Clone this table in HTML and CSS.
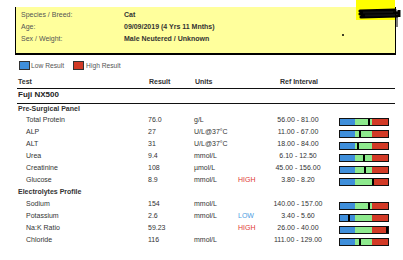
FILE: index.html
```html
<!DOCTYPE html>
<html>
<head>
<meta charset="utf-8">
<link rel="stylesheet" href="styles.css">
</head>
<body>
<div class="redact-bg"></div>
<svg class="redact" width="46" height="26" viewBox="0 0 46 26">
  <path d="M3 10 L38 9 M3 13 L40 12 M4 16 L40 15" stroke="#000" stroke-width="3.2" stroke-linecap="round" fill="none"/>
  <path d="M6 11.5 L36 11 M8 14.5 L38 14" stroke="#111" stroke-width="2" fill="none"/>
  <path d="M42 9 L42 16" stroke="#000" stroke-width="3" fill="none"/>
  <path d="M40 10 L40 26" stroke="#000" stroke-width="1" fill="none"/>
</svg>
<span class="dot"></span>
<div class="patient">
  <div class="prow"><span class="plabel">Species / Breed:</span><span class="pval">Cat</span></div>
  <div class="prow"><span class="plabel">Age:</span><span class="pval">09/09/2019 (4 Yrs 11 Mnths)</span></div>
  <div class="prow"><span class="plabel">Sex / Weight:</span><span class="pval">Male Neutered / Unknown</span></div>
</div>
<div class="legend">
  <span class="sq sq-low"></span><span class="ltext">Low Result</span>
  <span class="sq sq-high"></span><span class="ltext">High Result</span>
</div>
<div class="table">
  <div class="thead">
    <span class="c-name">Test</span><span class="c-res">Result</span><span class="c-unit">Units</span><span class="c-flag"></span><span class="c-ref">Ref Interval</span>
  </div>
  <div class="device">Fuji NX500</div>
  <div class="group">Pre-Surgical Panel</div>
  <div class="row"><span class="c-name">Total Protein</span><span class="c-res">76.0</span><span class="c-unit">g/L</span><span class="c-flag"></span><span class="c-ref">56.00 - 81.00</span><span class="bar"><i class="b"></i><i class="g"></i><i class="r"></i><b class="mk" style="left:28px"></b></span></div>
  <div class="row"><span class="c-name">ALP</span><span class="c-res">27</span><span class="c-unit">U/L@37°C</span><span class="c-flag"></span><span class="c-ref">11.00 - 67.00</span><span class="bar"><i class="b"></i><i class="g"></i><i class="r"></i><b class="mk" style="left:19px"></b></span></div>
  <div class="row"><span class="c-name">ALT</span><span class="c-res">31</span><span class="c-unit">U/L@37°C</span><span class="c-flag"></span><span class="c-ref">18.00 - 84.00</span><span class="bar"><i class="b"></i><i class="g"></i><i class="r"></i><b class="mk" style="left:17px"></b></span></div>
  <div class="row"><span class="c-name">Urea</span><span class="c-res">9.4</span><span class="c-unit">mmol/L</span><span class="c-flag"></span><span class="c-ref">6.10 - 12.50</span><span class="bar"><i class="b"></i><i class="g"></i><i class="r"></i><b class="mk" style="left:23px"></b></span></div>
  <div class="row"><span class="c-name">Creatinine</span><span class="c-res">108</span><span class="c-unit">µmol/L</span><span class="c-flag"></span><span class="c-ref">45.00 - 156.00</span><span class="bar"><i class="b"></i><i class="g"></i><i class="r"></i><b class="mk" style="left:24px"></b></span></div>
  <div class="row"><span class="c-name">Glucose</span><span class="c-res">8.9</span><span class="c-unit">mmol/L</span><span class="c-flag high">HIGH</span><span class="c-ref">3.80 - 8.20</span><span class="bar"><i class="b"></i><i class="g"></i><i class="r"></i><b class="mk" style="left:32px"></b></span></div>
  <div class="group">Electrolytes Profile</div>
  <div class="row"><span class="c-name">Sodium</span><span class="c-res">154</span><span class="c-unit">mmol/L</span><span class="c-flag"></span><span class="c-ref">140.00 - 157.00</span><span class="bar"><i class="b"></i><i class="g"></i><i class="r"></i><b class="mk" style="left:28px"></b></span></div>
  <div class="row"><span class="c-name">Potassium</span><span class="c-res">2.6</span><span class="c-unit">mmol/L</span><span class="c-flag low">LOW</span><span class="c-ref">3.40 - 5.60</span><span class="bar"><i class="b"></i><i class="g"></i><i class="r"></i><b class="mk" style="left:8px"></b></span></div>
  <div class="row"><span class="c-name">Na:K Ratio</span><span class="c-res">59.23</span><span class="c-unit"></span><span class="c-flag high">HIGH</span><span class="c-ref">26.00 - 40.00</span><span class="bar"><i class="b"></i><i class="g"></i><i class="r"></i><b class="mk" style="left:46px"></b></span></div>
  <div class="row"><span class="c-name">Chloride</span><span class="c-res">116</span><span class="c-unit">mmol/L</span><span class="c-flag"></span><span class="c-ref">111.00 - 129.00</span><span class="bar"><i class="b"></i><i class="g"></i><i class="r"></i><b class="mk" style="left:19px"></b></span></div>
</div>
</body>
</html>
```
FILE: styles.css
```css
html, body {
  margin: 0;
  padding: 0;
  background: #fff;
}
body {
  font-family: "Liberation Sans", Arial, sans-serif;
  font-size: 7px;
  color: #333;
  width: 403px;
  height: 260px;
  overflow: hidden;
  position: relative;
}
.redact-bg {
  position: absolute;
  left: 356px;
  top: 0;
  width: 39px;
  height: 20px;
  background: #ffff00;
  z-index: 2;
}
.redact {
  position: absolute;
  left: 357px;
  top: 1px;
  z-index: 3;
}
.dot {
  position: absolute;
  left: 342px;
  top: 34px;
  width: 2px;
  height: 2px;
  background: #000;
  border-radius: 50%;
  z-index: 3;
}
.patient {
  margin: 7px 0 0 15px;
  width: 379px;
  height: 44px;
  padding-top: 2px;
  background: #ffff9c;
  border-left: 1px solid #000;
  border-right: 1px solid #000;
  border-bottom: 2px solid #000;
}
.prow {
  display: flex;
  height: 12px;
  line-height: 12px;
}
.plabel {
  width: 103px;
  padding-left: 5px;
  color: #555;
}
.pval {
  font-weight: bold;
  color: #333;
}
.legend {
  display: flex;
  align-items: center;
  margin: 6px 0 0 19px;
  height: 9px;
  font-size: 6.7px;
  color: #555;
}
.sq {
  width: 9px;
  height: 7px;
  border: 1px solid #333;
}
.sq-low { background: #3f8fdb; margin-right: 1px; }
.sq-high { background: #d23a26; margin-left: 9px; margin-right: 2px; }
.table {
  margin: 6px 0 0 17px;
  width: 378px;
}
.thead, .row {
  display: grid;
  grid-template-columns: 131px 46px 44px 30px 60px 50px;
  column-gap: 0;
  height: 12px;
  line-height: 12px;
}
.thead {
  font-weight: bold;
  border-bottom: 1px solid #111;
  padding-left: 1px;
}
.thead .c-name { width: 130px; }
.row .c-name { padding-left: 9px; }
.c-ref { text-align: center; }
.device {
  font-weight: bold;
  font-size: 8px;
  line-height: 11px;
  height: 11px;
  padding: 0 0 3px 1px;
  border-bottom: 1px solid #111;
  color: #222;
}
.group {
  font-weight: bold;
  height: 10px;
  line-height: 10px;
  padding-left: 1px;
}
.row + .group { height: 12px; line-height: 12px; }
.high { color: #e03a33; }
.low { color: #4b9de2; }
.bar {
  position: relative;
  margin-left: 11px;
  margin-top: 4px;
  width: 48px;
  height: 6px;
  border: 1px solid #111;
  display: flex;
}
.bar i { display: block; height: 6px; }
.bar .b { width: 15px; background: #3f8fdb; }
.bar .g { width: 17px; background: #8eea8e; }
.bar .r { width: 16px; background: #d23a26; }
.mk {
  position: absolute;
  top: 0;
  width: 2px;
  height: 6px;
  background: #000;
}
```
